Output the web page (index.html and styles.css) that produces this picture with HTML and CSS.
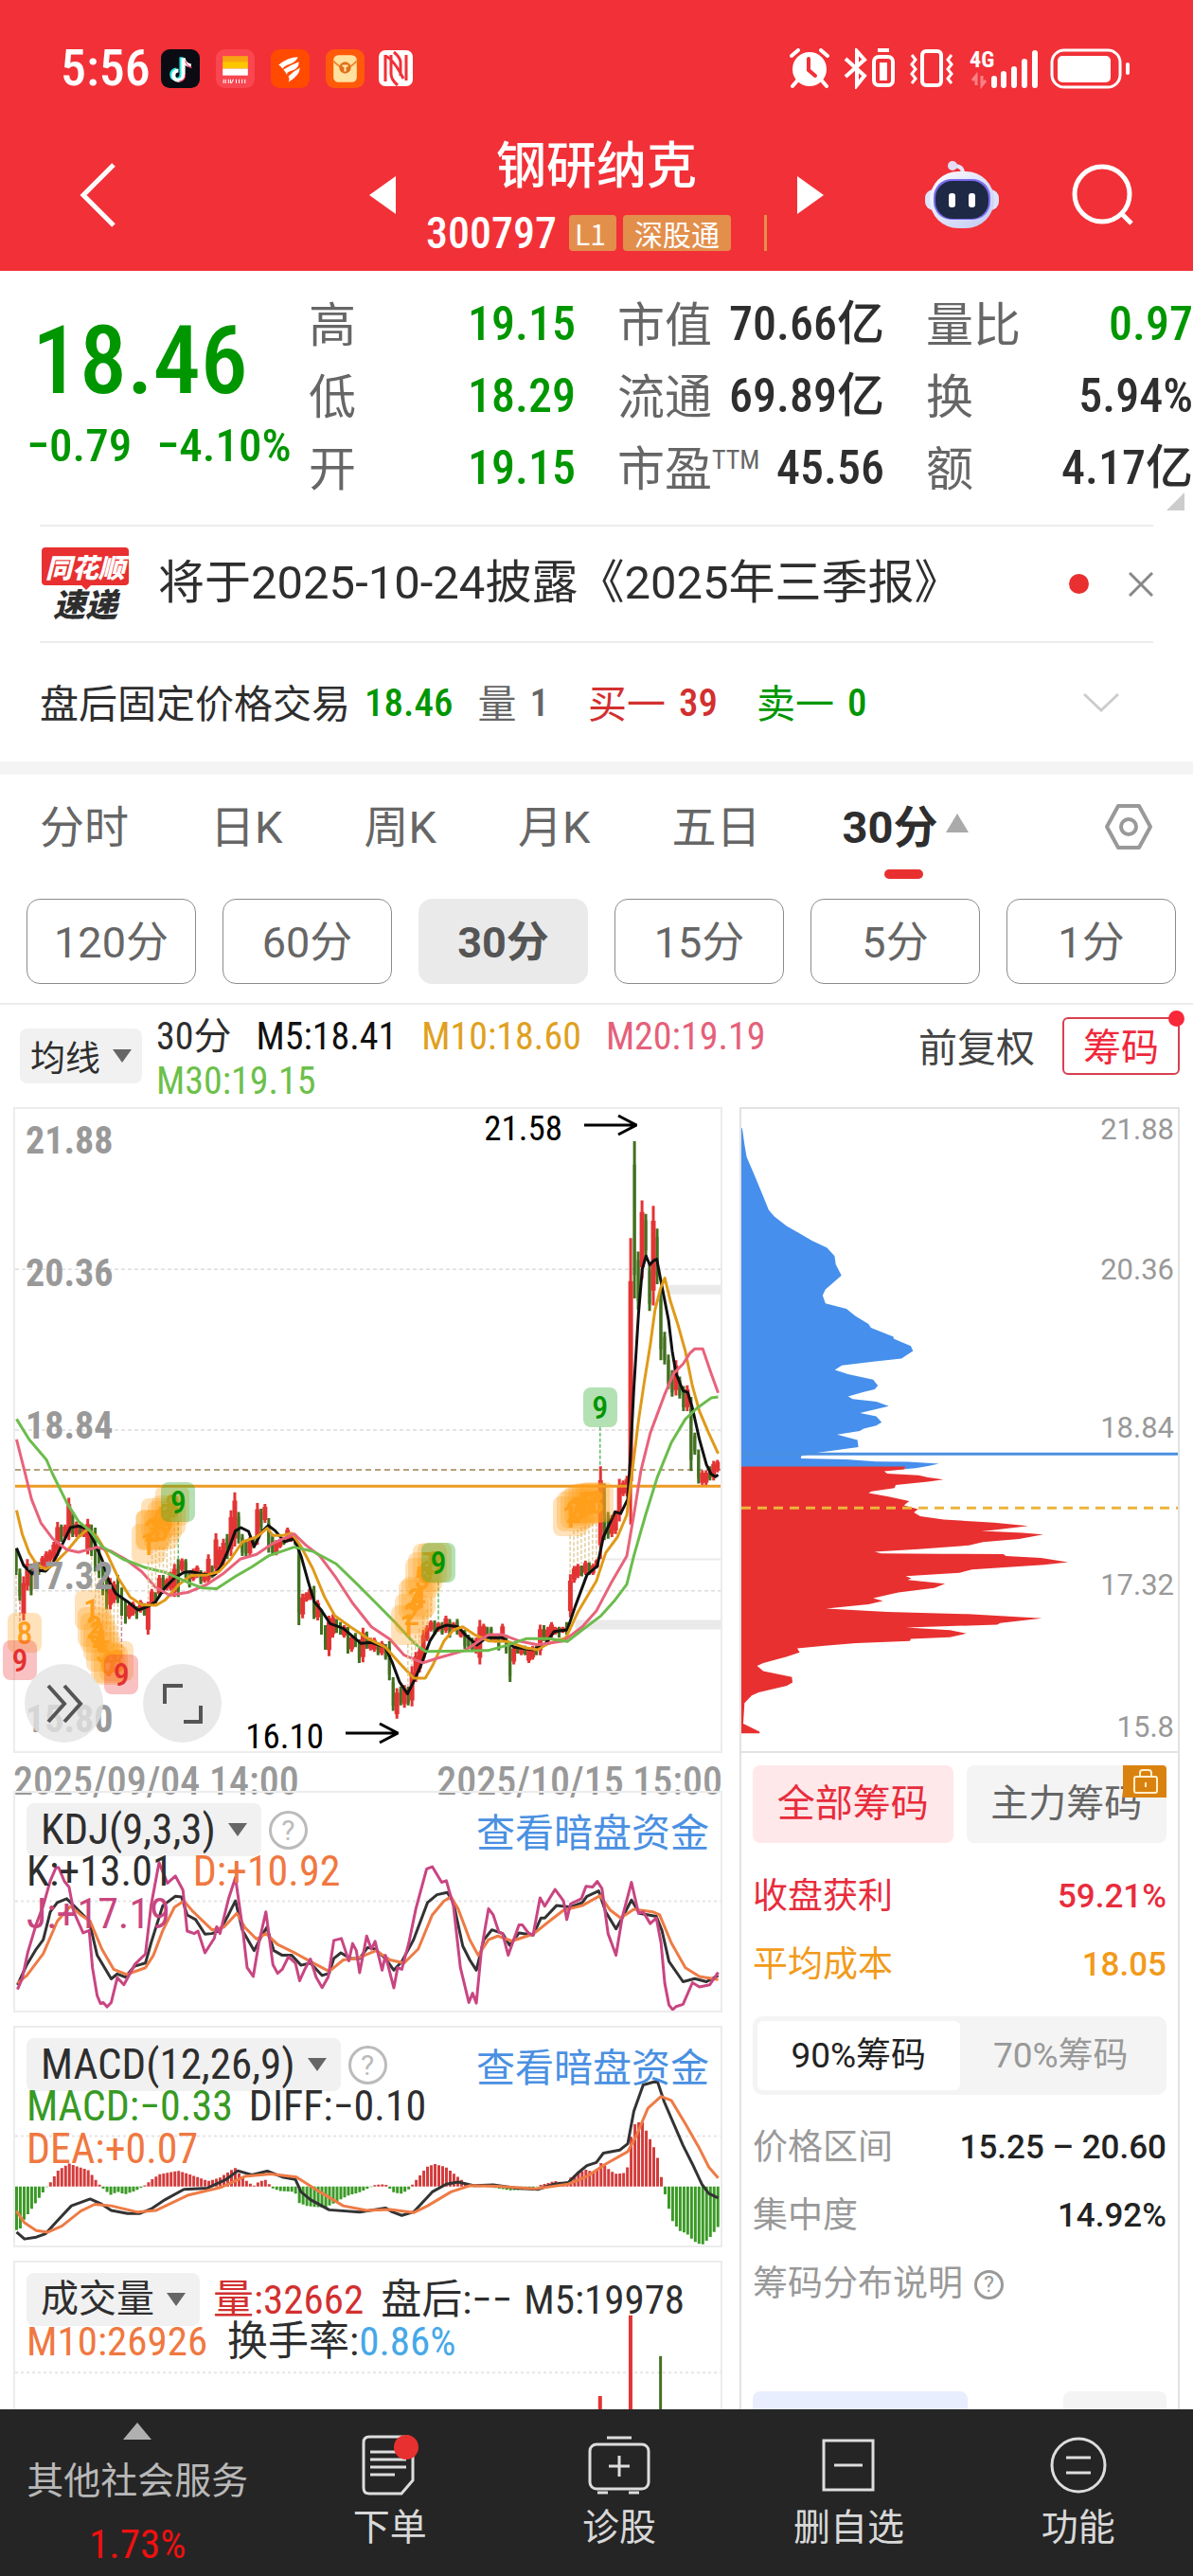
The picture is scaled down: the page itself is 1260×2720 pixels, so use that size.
FILE: index.html
```html
<!DOCTYPE html>
<html lang="zh-CN">
<head>
<meta charset="utf-8">
<meta name="viewport" content="width=device-width, initial-scale=1">
<title>钢研纳克 300797</title>
<link rel="stylesheet" href="styles.css">
</head>
<body>
<header class="top">
  <div class="status">
    <span class="clock">5:56</span>
    <svg class="app" viewBox="0 0 40 40"><rect width="40" height="40" rx="9" fill="#0b0b14"/><path d="M21 8v18a5 5 0 1 1-5-5" fill="none" stroke="#27e8e2" stroke-width="4"/><path d="M23 9v18a5 5 0 1 1-5-5M23 9q1 7 8 8" fill="none" stroke="#fff" stroke-width="4"/><path d="M25 12q2 6 7 7M25 26a6 6 0 0 1-6 7" fill="none" stroke="#fe2c55" stroke-width="1"/></svg>
    <svg class="app" viewBox="0 0 40 40"><rect width="40" height="40" rx="9" fill="#f94650"/><path d="M7 7h26v7H7z" fill="#f7a413"/><path d="M7 13h26v7H7z" fill="#fdc700"/><path d="M7 20h26v7H7z" fill="#fff"/><path d="M8 31v4m2-4v4m3-4v4m2-4v4m3-4l-2 4m5-4v4m3-4v4m3-4v4m3-4v4" stroke="#fff" stroke-width="1"/></svg>
    <svg class="app" viewBox="0 0 40 40"><rect width="40" height="40" rx="9" fill="#ff4a00"/><path d="M8 16q10-8 20-8-2 5-8 7t-8 5q-2-3-4-4zM13 21q8-5 16-8 0 7-7 9t-5 5q-2-4-4-6zM18 28q5-5 12-9 0 8-12 15 2-3 0-6z" fill="#fff"/></svg>
    <svg class="app" viewBox="0 0 40 40"><rect width="40" height="40" rx="9" fill="#ff5a0a"/><rect x="8" y="6" width="24" height="28" rx="5" fill="#ffe2a0"/><path d="M8 12q12 14 24 0" fill="none" stroke="#f08a30" stroke-width="2"/><circle cx="20" cy="19" r="6" fill="#e0701a"/><path d="M17 17h6m-3 0v6" stroke="#ffe9b0" stroke-width="2"/></svg>
    <svg class="nfc" viewBox="0 0 38 40"><rect x="1" y="1" width="36" height="38" rx="7" fill="#fff"/><path d="M8 6v28M14 6v20q0 6 7 12M8 7q9 4 19 24M17 3q6 5 7 10v15M30 6v27" fill="none" stroke="#f23037" stroke-width="3"/></svg>
    <svg class="signals" viewBox="0 0 362 43">
      <g fill="#fff"><circle cx="21" cy="22" r="18"/><path d="M9 33l-6 7M33 33l6 7M2 8l7-6M40 8l-7-6" stroke="#fff" stroke-width="4" stroke-linecap="round"/></g>
      <path d="M20 11v12l7 6" fill="none" stroke="#f23037" stroke-width="4" stroke-linecap="round"/>
      <g fill="none" stroke="#fff" stroke-width="4">
        <path d="M59 11l20 18-8 10V3l8 9-20 18"/><rect x="89" y="9" width="20" height="30" rx="5"/><path d="M93 2h12"/><rect x="97" y="17" width="4" height="15"/>
        <rect x="140" y="3" width="20" height="36" rx="4"/><path d="M129 7l4 5-4 5 4 5-4 5 4 5-4 5M171 7l-4 5 4 5-4 5 4 5-4 5 4 5" stroke-width="3"/>
      </g>
      <g stroke="#fff" stroke-width="6" stroke-linecap="round"><path d="M216 32v7M226 27v12M237 22v17M248 14v25M259 5v34"/></g>
      <g stroke="#fff" opacity=".4" stroke-width="3"><path d="M197 39V29l-4 5M203 29v10l4-5" fill="none"/></g>
      <rect x="277" y="2" width="72" height="39" rx="13" fill="none" stroke="#fff" stroke-width="3"/><rect x="283" y="8" width="56" height="28" rx="5" fill="#fff"/><path d="M357 17v9" stroke="#fff" stroke-width="4" stroke-linecap="round"/>
      <text class="net" x="190" y="20">4G</text>
    </svg>
  </div>
  <nav class="titlebar">
    <button class="icon-btn back" aria-label="返回"><svg viewBox="0 0 40 70" width="40" height="70"><path d="M36 3L4 35l32 32" fill="none" stroke="#fff" stroke-width="5"/></svg></button>
    <div class="stock">
      <button class="icon-btn" aria-label="上一只"><svg viewBox="0 0 28 40" width="28" height="40"><path d="M28 0v40L0 20z" fill="#fff"/></svg></button>
      <div class="stock-name">
        <h1>钢研纳克</h1>
        <p><span class="code">300797</span><span class="tag tag-l">L1</span><span class="tag">深股通</span><i class="tag-more"></i></p>
      </div>
      <button class="icon-btn" aria-label="下一只"><svg viewBox="0 0 28 40" width="28" height="40"><path d="M0 0v40l28-20z" fill="#fff"/></svg></button>
    </div>
    <div class="tools">
      <button class="icon-btn" aria-label="智能助手"><svg viewBox="0 0 78 72" width="78" height="72"><defs><linearGradient id="shell" x1="0" y1="0" x2="1" y2="1"><stop offset="0" stop-color="#fff"/><stop offset="1" stop-color="#bfc8f2"/></linearGradient></defs><path d="M40 13q0-8-10-8" fill="none" stroke="#e8e4f8" stroke-width="4"/><circle cx="29" cy="5" r="5" fill="#e2ddf5"/><rect x="0" y="30" width="78" height="22" rx="9" fill="#dfe3fa"/><rect x="5" y="11" width="68" height="60" rx="30" fill="url(#shell)"/><rect x="9" y="19" width="60" height="43" rx="19" fill="#7a6bf0"/><rect x="11" y="21" width="56" height="40" rx="18" fill="#1e2946"/><rect x="25" y="34" width="7" height="15" rx="3" fill="#fff"/><rect x="46" y="34" width="7" height="15" rx="3" fill="#fff"/></svg></button>
      <button class="icon-btn" aria-label="搜索"><svg viewBox="0 0 66 66" width="66" height="66"><circle cx="32" cy="32" r="29" fill="none" stroke="#fff" stroke-width="5"/><path d="M51 51l12 12" stroke="#fff" stroke-width="5"/></svg></button>
    </div>
  </nav>
</header>

<main>
  <section class="quote">
    <div class="price">
      <strong>18.46</strong>
      <p><span>−0.79</span><span>−4.10%</span></p>
    </div>
    <dl class="facts">
      <div><dt>高</dt><dd class="down">19.15</dd></div>
      <div><dt>市值</dt><dd>70.66亿</dd></div>
      <div><dt>量比</dt><dd class="down">0.97</dd></div>
      <div><dt>低</dt><dd class="down">18.29</dd></div>
      <div><dt>流通</dt><dd>69.89亿</dd></div>
      <div><dt>换</dt><dd>5.94%</dd></div>
      <div><dt>开</dt><dd class="down">19.15</dd></div>
      <div><dt>市盈<sup>TTM</sup></dt><dd>45.56</dd></div>
      <div><dt>额</dt><dd>4.17亿</dd></div>
    </dl>
    <i class="corner"></i>
  </section>

  <section class="news">
    <span class="logo"><b>同花顺</b><em>速递</em></span>
    <a href="#report">将于2025-10-24披露《2025年三季报》</a>
    <i class="dot"></i>
    <button class="icon-btn" aria-label="关闭"><svg viewBox="0 0 26 26" width="26" height="26"><path d="M1 1l24 24M25 1L1 25" stroke="#888" stroke-width="3"/></svg></button>
  </section>

  <section class="after">
    <span>盘后固定价格交易</span><b class="down last-price">18.46</b><span class="grey">量</span><b class="grey">1</b><span class="up">买一</span><b class="up">39</b><span class="down">卖一</span><b class="down">0</b>
    <button class="icon-btn" aria-label="展开"><svg viewBox="0 0 38 22" width="38" height="22"><path d="M1 2l18 17L37 2" fill="none" stroke="#ccc" stroke-width="3"/></svg></button>
  </section>

  <div class="tabs">
    <button>分时</button><button>日K</button><button>周K</button><button>月K</button><button>五日</button><button class="on">30分<i class="tri-up"></i></button>
    <button class="settings" aria-label="设置"><svg viewBox="0 0 52 50" width="52" height="50"><path d="M15 3h22l12 22-12 22H15L3 25z" fill="none" stroke="#999" stroke-width="4" stroke-linejoin="round"/><circle cx="26" cy="25" r="8" fill="none" stroke="#999" stroke-width="4"/></svg></button>
  </div>
  <div class="pills">
    <button>120分</button><button>60分</button><button class="on">30分</button><button>15分</button><button>5分</button><button>1分</button>
  </div>

  <div class="ma">
    <button class="drop">均线<i class="tri"></i></button>
    <p class="ma-list"><span>30分</span><span class="m5">M5:18.41</span><span class="m10">M10:18.60</span><span class="m20">M20:19.19</span><span class="m30">M30:19.15</span></p>
    <button class="plain">前复权</button>
    <button class="chips-btn">筹码<i></i></button>
  </div>

  <div class="board">
    <div class="left">
      <section class="plot" id="kline">
        <svg class="chart" viewBox="30 -990 1505 2040" preserveAspectRatio="none"></svg>
        <div class="axis"><span>21.88</span><span>20.36</span><span>18.84</span><span>17.32</span><span>15.80</span></div>
        <div class="marks"></div>
        <span class="note note-high">21.58<svg viewBox="0 0 56 24" width="56" height="24"><path d="M0 12h54M36 2l19 10-19 10" fill="none" stroke="#000" stroke-width="3"/></svg></span>
        <span class="note note-low">16.10<svg viewBox="0 0 56 24" width="56" height="24"><path d="M0 12h54M36 2l19 10-19 10" fill="none" stroke="#000" stroke-width="3"/></svg></span>
        <div class="float">
          <button aria-label="展开工具"><svg viewBox="0 0 42 42" width="42" height="42"><path d="M4 2l17 19L4 40M21 2l17 19-17 19" fill="none" stroke="#555" stroke-width="4"/></svg></button>
          <button aria-label="全屏"><svg viewBox="0 0 44 44" width="44" height="44"><path d="M3 22V3h19M41 24v17H23" fill="none" stroke="#555" stroke-width="4"/></svg></button>
        </div>
      </section>
      <p class="dates"><span>2025/09/04 14:00</span><span>2025/10/15 15:00</span></p>
      <section class="pane" id="kdj">
        <svg class="chart" viewBox="30 37 1505 701" preserveAspectRatio="none"></svg>
        <div class="pane-head"><button class="drop">KDJ(9,3,3)<i class="tri"></i></button><span class="help">?</span><a href="#dark">查看暗盘资金</a></div>
        <p><span>K:+13.01</span><span class="wide orange">D:+10.92</span></p>
        <p><span class="pink">J:+17.19</span></p>
      </section>
      <section class="pane" id="macd">
        <svg class="chart" viewBox="30 30 1505 703" preserveAspectRatio="none"></svg>
        <div class="pane-head"><button class="drop">MACD(12,26,9)<i class="tri"></i></button><span class="help">?</span><a href="#dark">查看暗盘资金</a></div>
        <p class="tight"><span class="green">MACD:−0.33</span><span>DIFF:−0.10</span></p>
        <p><span class="orange">DEA:+0.07</span></p>
      </section>
      <section class="pane last" id="vol">
        <svg class="chart" viewBox="30 773 1505 469" preserveAspectRatio="none"></svg>
        <div class="pane-head"><button class="drop">成交量<i class="tri"></i></button><span class="up first">量:32662</span><span class="mid">盘后:−−</span><span>M5:19978</span></div>
        <p><span class="orange">M10:26926</span><span class="wide">换手率:<span class="sky">0.86%</span></span></p>
      </section>
    </div>

    <aside class="right">
      <div class="dist">
        <svg class="chart" viewBox="35 21 1391 1523" preserveAspectRatio="none">
          <path fill="#468fec" d="M35 65L38 68 45 105 52 135 75 175 100 220 122 260 140 276 180 299 220 316 260 333 308 350 332 370 336 390 354 416 303 449 294 463 303 482 370 495 398 512 440 531 448 540 520 561 520 566 575 583 582 595 545 613 455 620 355 629 333 640 375 650 455 663 470 677 460 686 425 692 375 703 390 709 465 715 505 726 413 742 465 750 482 764 465 772 425 779 412 785 340 793 405 806 408 823 280 836 225 844 225 850 370 852 465 857 564 858 665 862 630 868 590 873 555 875 555 870 35 870z"/>
          <path fill="#e83030" d="M35 869H557L555 876 490 880 500 886 600 890 630 895 679 900 630 905 527 913 523 920 450 928 440 932 500 940 570 951 553 961 598 970 585 978 605 987 680 995 840 1002 949 1010 835 1020 800 1022 930 1026 997 1030 920 1041 805 1048 760 1056 600 1065 460 1071 480 1075 672 1076 870 1077 878 1081 990 1086 1076 1096 1000 1102 770 1113 730 1121 558 1129 577 1134 565 1138 684 1147 650 1157 535 1168 455 1181 486 1188 440 1196 305 1206 500 1214 756 1219 993 1229 860 1240 850 1244 560 1251 700 1257 752 1265 700 1274 575 1278 572 1283 400 1288 300 1294 213 1300 221 1310 180 1320 105 1335 85 1342 105 1354 196 1368 198 1381 180 1389 90 1405 68 1412 45 1430 41 1479 93 1498 93 1502H35z"/>
          <path d="M35 839H1426" stroke="#4a90e2" stroke-width="3"/>
          <path d="M35 967H1426" stroke="#ecb43c" stroke-width="3" stroke-dasharray="10 7"/>
        </svg>
        <div class="axis"><span>21.88</span><span>20.36</span><span>18.84</span><span>17.32</span><span>15.8</span></div>
      </div>
      <div class="stats">
        <div class="choose"><button class="on">全部筹码</button><button>主力筹码<svg class="lock" viewBox="0 0 46 34"><path d="M0 0h42q4 0 4 4v30H0z" fill="#d9820f"/><rect x="12" y="12" width="24" height="17" rx="2" fill="none" stroke="#ffeecb" stroke-width="2"/><path d="M18 12V8q0-3 3-3h6q3 0 3 3v4M24 18v5" fill="none" stroke="#ffeecb" stroke-width="2"/></svg></button></div>
        <p class="row red"><span>收盘获利</span><b>59.21%</b></p>
        <p class="row amber"><span>平均成本</span><b>18.05</b></p>
        <div class="seg"><button class="on">90%筹码</button><button>70%筹码</button></div>
        <p class="row"><span>价格区间</span><b>15.25 – 20.60</b></p>
        <p class="row"><span>集中度</span><b>14.92%</b></p>
        <p class="row"><span>筹码分布说明<i class="help small">?</i></span></p>
        <div class="stub"><i></i><i></i></div>
      </div>
    </aside>
  </div>
</main>

<nav class="bottom">
  <a href="#sector" class="sector"><i></i><span>其他社会服务</span><b>1.73%</b></a>
  <a href="#trade"><svg viewBox="0 0 60 64" width="60" height="64"><path d="M8 2h40q6 0 6 6v40L42 62H8q-6 0-6-6V8q0-6 6-6z" fill="none" stroke="#ddd" stroke-width="3"/><path d="M9 18h28M9 26h38M9 34h38M9 42h26" stroke="#ddd" stroke-width="3"/><circle cx="47" cy="13" r="13" fill="#e83030"/></svg><span>下单</span></a>
  <a href="#diagnose"><svg viewBox="0 0 66 64" width="66" height="64"><rect x="2" y="10" width="62" height="47" rx="7" fill="none" stroke="#ddd" stroke-width="3"/><path d="M20 3h26M33 22v22M22 33h22M10 61h11M43 61h11" stroke="#ddd" stroke-width="3"/></svg><span>诊股</span></a>
  <a href="#remove"><svg viewBox="0 0 56 64" width="56" height="64"><rect x="2" y="6" width="52" height="52" fill="none" stroke="#ddd" stroke-width="3"/><path d="M13 32h30" stroke="#ddd" stroke-width="3"/></svg><span>删自选</span></a>
  <a href="#more"><svg viewBox="0 0 60 64" width="60" height="64"><circle cx="30" cy="32" r="28" fill="none" stroke="#ddd" stroke-width="3"/><path d="M17 24h26M17 40h26" stroke="#ddd" stroke-width="3"/></svg><span>功能</span></a>
</nav>
<script src="script.js"></script>
</body>
</html>
```
FILE: styles.css
```css
:root {
  --num: "Liberation Sans Narrow", "Roboto Condensed", Roboto, "Noto Sans CJK SC", sans-serif;
  --text: Roboto, "Noto Sans CJK SC", sans-serif;
  --line: #ececec;
  --ink: #2e2e2e;
}
* { box-sizing: border-box; }
body { margin: 0; min-height: 100vh; display: flex; flex-direction: column; background: #fff; color: var(--ink); font-family: "Noto Sans CJK SC", sans-serif; }
h1, p, dl, dd { margin: 0; }
button { font: inherit; color: inherit; border: 0; padding: 0; background: none; white-space: nowrap; }
a { color: inherit; text-decoration: none; }
svg { display: block; }
i, em { font-style: normal; }
.icon-btn { flex: none; display: flex; }
.down { color: #009600; }
.up { color: #d2302f; }

/* header */
.top { background: #f23037; color: #fff; }
.status { display: flex; align-items: center; height: 104px; padding: 40px 64px 0; }
.clock { font: 500 54px/64px var(--num); margin-right: 11px; }
.app { flex: none; width: 41px; height: 41px; margin-right: 17px; }
.nfc { flex: none; width: 38px; height: 40px; margin-left: -3px; }
.signals { flex: none; margin-left: auto; width: 362px; height: 43px; }
.net { font: 700 24px var(--num); fill: #fff; }
.titlebar { display: grid; grid-template-columns: 1fr 480px 1fr; align-items: center; height: 182px; padding: 22px 62px 0 84px; }
.stock { display: flex; align-items: center; justify-content: space-between; margin-left: -11px; margin-right: 11px; }
.stock-name { text-align: center; }
.stock-name h1 { font-size: 53px; line-height: 62px; font-weight: 500; }
.stock-name p { display: flex; align-items: center; gap: 7px; height: 70px; padding-top: 18px; }
.code { font: 500 46px/48px var(--num); margin-right: 6px; }
.tag { font-size: 30px; line-height: 38px; background: #e38f4c; padding: 0 12px; border-radius: 4px; }
.tag-l { padding: 0 11px 0 6px; }
.tag-more { width: 3px; height: 38px; background: #e38f4c; margin-left: 28px; }
.tools { display: flex; align-items: center; justify-content: flex-end; gap: 77px; }

/* quote */
.quote { position: relative; display: flex; padding: 18px 0 22px; }
.price { width: 326px; padding-top: 14px; color: #009600; font-family: var(--num); font-weight: 500; }
.price strong { display: block; font-size: 100px; line-height: 126px; font-weight: 500; padding-left: 34px; }
.price p { display: flex; gap: 26px; padding-left: 28px; font-size: 49px; line-height: 54px; }
.facts { flex: 1; display: grid; grid-template-columns: repeat(3, 1fr); column-gap: 44px; }
.facts div { display: flex; justify-content: space-between; font-size: 50px; line-height: 76px; height: 76px; white-space: nowrap; }
.facts dt { color: #666; line-height: 70px; }
.facts sup { font-size: 28px; line-height: 28px; vertical-align: 18px; font-family: var(--num); }
.facts dd { font-family: var(--num); font-weight: 500; }
.corner { position: absolute; right: 9px; bottom: 15px; border-left: 19px solid transparent; border-bottom: 19px solid #ccc; }
.news { display: flex; align-items: center; height: 125px; margin: 0 42px; border-top: 2px solid var(--line); border-bottom: 2px solid var(--line); }
.logo { width: 96px; display: flex; flex-direction: column; align-items: center; }
.logo b { position: relative; width: 92px; border-radius: 4px; background: #e83030; color: #fff; font-size: 28px; font-weight: 900; font-style: italic; line-height: 40px; text-align: center; }
.logo b::after { content: ""; position: absolute; left: 42px; top: 40px; border: 5px solid transparent; border-top-color: #e83030; }
.logo em { font-size: 34px; font-weight: 900; font-style: italic; line-height: 38px; }
.news a { font-size: 49px; line-height: 60px; margin-left: 29px; padding-bottom: 2px; white-space: nowrap; font-family: var(--text); }
.dot { width: 21px; height: 21px; border-radius: 50%; background: #e83030; margin: 0 42px 0 auto; }
.after { display: flex; align-items: center; height: 125px; padding: 0 78px 0 42px; font-size: 41px; white-space: nowrap; }
.after span { line-height: 56px; padding-bottom: 3px; }
.after b { font: 500 41px/50px var(--num); margin: 0 41px 0 14px; }
.after .last-price { margin: 0 26px 0 15px; }
.after .grey { color: #666; }
.after .icon-btn { margin-left: auto; }

/* periods */
.tabs { display: flex; gap: 86px; align-items: stretch; height: 124px; border-top: 14px solid #f4f4f4; padding: 0 42px; font-size: 47px; color: #666; font-family: var(--text); }
.tabs button { position: relative; display: flex; align-items: center; padding-bottom: 8px; }
.tabs .on { color: var(--ink); font-weight: 700; }
.tabs .on::after { content: ""; position: absolute; left: 44px; bottom: 0; width: 41px; height: 10px; border-radius: 5px; background: #e83030; }
.tri-up { border: 12px solid transparent; border-top: 0; border-bottom: 20px solid #aaa; margin-left: 9px; }
.tabs .settings { margin-left: auto; padding: 0; }
.pills { display: grid; grid-template-columns: repeat(6, 1fr); gap: 28px; padding: 21px 18px 20px 28px; border-bottom: 2px solid var(--line); }
.pills button { height: 90px; padding-bottom: 5px; border: 1px solid #8c8c8c; border-radius: 14px; font: 45px var(--text); color: #666; }
.pills .on { background: #eaeaea; border-color: #eaeaea; font-weight: 700; color: #555; }

.ma { display: flex; align-items: flex-start; height: 108px; padding: 10px 14px 0 21px; font-size: 37px; white-space: nowrap; }
.drop { display: flex; align-items: center; background: #f1f1f1; border-radius: 8px; height: 56px; padding: 0 15px; font: 45px/50px var(--num); }
.tri { border: 10px solid transparent; border-bottom: 0; border-top: 14px solid #666; margin-left: 13px; }
.ma .drop { height: 58px; margin-top: 15px; font: 37px/50px "Noto Sans CJK SC", sans-serif; padding: 0 11px; }
.ma-list { flex: 1; display: flex; flex-wrap: wrap; column-gap: 26px; padding-left: 15px; padding-right: 80px; font: 40px/47px var(--num); }
.m5 { color: #111; }
.m10 { color: #e0a020; }
.m20 { color: #e5607a; }
.m30 { color: #6cc04a; }
.plain { font-size: 41px; line-height: 64px; color: #444; }
.chips-btn { position: relative; margin: 3px 0 0 29px; height: 61px; padding: 0 20px 3px; border: 2px solid #d84050; border-radius: 6px; color: #f0283c; font-size: 40px; line-height: 50px; }
.chips-btn i { position: absolute; right: -7px; top: -9px; width: 17px; height: 17px; border-radius: 50%; background: #f8283a; }

/* charts */
main { flex: 1; display: flex; flex-direction: column; }
.board { flex: 1; display: grid; grid-template-columns: minmax(0, 749fr) minmax(0, 465fr); column-gap: 18px; padding: 0 14px; }
.left { display: flex; flex-direction: column; }
.right { display: flex; flex-direction: column; border: 2px solid #e2e2e2; border-bottom: 0; }
.plot { position: relative; height: 682px; border: 2px solid var(--line); }
.chart { position: absolute; inset: 0; width: 100%; height: 100%; }
.chart path { vector-effect: non-scaling-stroke; }
.chart .line { fill: none; stroke-width: 3; stroke-linejoin: round; }
.axis { position: relative; display: grid; height: 100%; align-items: end; color: #999; }
.plot .axis { grid-template-rows: 57fr 141fr 161fr 160fr 151fr 10fr; padding-left: 11px; font: 700 40px/46px var(--num); }
.mark { position: absolute; width: 36px; height: 42px; margin: -21px 0 0 -18px; border-radius: 8px; font: 500 34px/42px var(--num); text-align: center; }
.mark-o { background: rgba(255, 159, 28, .3); color: #ff9f1c; }
.mark-g { background: rgba(40, 170, 40, .35); color: #009600; }
.mark-r { background: rgba(235, 50, 50, .3); color: #e33030; }
.note { position: absolute; display: flex; align-items: center; gap: 23px; font: 37px/40px var(--num); color: #000; }
.note-high { top: 1px; right: 88px; }
.note svg { margin-bottom: 8px; }
.note-low { bottom: -5px; right: 340px; }
.float { position: absolute; left: 10px; bottom: 9px; display: flex; gap: 42px; }
.float button { width: 83px; height: 83px; border-radius: 50%; background: rgba(228, 228, 228, .8); display: flex; align-items: center; justify-content: center; }
.dates { display: flex; justify-content: space-between; height: 40px; font: 500 42px/60px var(--num); color: #999; white-space: nowrap; }
.pane { position: relative; height: 234px; margin-bottom: 14px; border: 2px solid var(--line); padding: 11px 12px; font: 44px/45px var(--num); white-space: nowrap; }
.pane.last { flex: 1; height: auto; margin: 0; border-bottom: 0; font-size: 43px; }
.pane > p, .pane-head { position: relative; display: flex; gap: 17px; }
.pane > p .wide { margin-left: 4px; }
.pane-head { align-items: center; gap: 8px; margin-bottom: -6px; }
.pane-head a { margin-left: auto; font: 41px/45px "Noto Sans CJK SC", sans-serif; color: #4a90e2; }
.pane.last .drop { font-size: 40px; }
.help { width: 41px; height: 41px; border: 3px solid #bbb; border-radius: 50%; color: #bbb; font: 30px/35px Roboto, sans-serif; text-align: center; }
.pane-head .first { margin-left: 6px; }
.pane-head .mid { margin: 0 4px 0 10px; }
.orange { color: #f07840; }
.pink { color: #c8457f; }
.green { color: #379a24; }
.sky { color: #46a8e8; }

/* cost distribution */
.dist { position: relative; height: 680px; border-bottom: 2px solid #e2e2e2; }
.dist .axis { grid-template-rows: 40fr 149fr 167fr 167fr 150fr 7fr; font: 31px/36px Roboto, sans-serif; text-align: right; padding-right: 4px; }
.stats { flex: 1; display: flex; flex-direction: column; padding: 13px 12px 0; font: 37px/72px var(--text); }
.choose { display: grid; grid-template-columns: 1fr 1fr; gap: 14px; font-size: 40px; margin-bottom: 21px; }
.choose button { position: relative; height: 82px; border-radius: 8px; background: #f4f4f4; color: #666; }
.choose .on { background: #ffe8ea; color: #e82c3c; }
.lock { position: absolute; right: 0; top: 0; width: 46px; height: 34px; }
.row { display: flex; justify-content: space-between; color: #999; line-height: 72px; white-space: nowrap; }
.row b { font-weight: 500; color: #222; font-size: 35px; }
.row.red, .red b { color: #e82c3c; }
.row.amber, .amber b { color: #f29a1a; }
.seg { display: grid; grid-template-columns: 1fr 1fr; height: 83px; margin: 18px 0 20px; padding: 5px; border-radius: 10px; background: #f4f4f4; color: #999; }
.seg .on { background: #fff; border-radius: 6px; color: #222; }
.small { display: inline-block; width: 31px; height: 31px; font-size: 23px; line-height: 26px; margin-left: 12px; vertical-align: 4px; border-color: #999; color: #999; }
.stub { display: flex; justify-content: space-between; margin-top: auto; }
.stub i { height: 19px; width: 52%; border-radius: 8px 8px 0 0; background: #e8eefe; }
.stub i + i { width: 25%; background: #f4f4f4; }

/* bottom bar */
.bottom { display: grid; grid-template-columns: 290fr repeat(4, 242fr); height: 176px; background: #252525; color: #d8d8d8; font-size: 39px; }
.bottom a { display: flex; flex-direction: column; align-items: center; padding-top: 27px; line-height: 60px; }
.bottom .sector { padding-top: 14px; color: #b8b8b8; }
.sector i { border: 15px solid transparent; border-top: 0; border-bottom: 18px solid #b0b0b0; }
.sector span { line-height: 80px; }
.sector b { color: #f01010; font: 43px/60px var(--num); }
```
FILE: script.js
```js
const NS = 'http://www.w3.org/2000/svg';
const STEP = 8.045;

function add(svg, d, attrs) {
  const p = document.createElementNS(NS, 'path');
  p.setAttribute('d', d);
  for (const k in attrs) p.setAttribute(k, attrs[k]);
  svg.appendChild(p);
}
const line = (svg, pts, stroke) => add(svg, 'M' + pts, { class: 'line', stroke });
const chartOf = id => document.querySelector('#' + id + ' .chart');

/* price chart */
const k = chartOf('kline');
add(k, 'M30 -481H1535M30 30H1535M30 541H1535', { stroke: '#dcdcdc', 'stroke-width': 1.5, 'stroke-dasharray': '4 3' });
add(k, 'M1425 -416H1535M1225 648H1535', { stroke: '#eaeaea', 'stroke-width': 10 });
add(k, 'M1290 441H1535', { stroke: '#eaeaea', 'stroke-width': 2 });
add(k, 'M30 156H1535', { stroke: '#b7a07c', 'stroke-width': 2, 'stroke-dasharray': '6 4' });

/* one entry per bar: colour, high, low */
const bars = `g405,490 g470,572 r495,635 r440,540 g455,555 r445,495 g450,490 r430,475 r415,470 r410,450 r385,445 r322,430 g330,385 r330,375 r245,380 g290,370 r320,370 g330,370 r335,370 r312,425 g330,430 g340,480 g400,500 g460,555 g500,600 r500,600 r510,580 g490,580 g530,620 g570,645 r580,630 r575,620 g590,630 r570,610 g580,620 r575,680 r535,590 g545,580 r490,560 g490,550 r500,540 r480,540 r455,560 g440,560 r438,480 g440,500 g475,530 r470,510 r460,500 g475,520 r480,515 r425,520 g460,500 r358,490 r400,470 r375,460 g360,440 r285,430 r228,400 g290,390 g360,430 g380,430 r370,430 g370,405 r262,395 g280,350 r265,325 g310,420 g360,428 r380,428 r375,405 g375,395 r340,385 r355,385 g360,395 g390,650 r550,628 r545,575 r530,570 g525,630 r570,635 g600,680 g650,728 r620,748 r615,690 g630,675 g640,680 r650,690 g655,740 r680,735 g675,720 g695,770 r658,768 g670,725 r690,730 r690,735 g705,745 r700,745 g710,760 g700,825 g815,922 r850,947 g845,905 r840,912 g845,905 r780,908 r735,830 r720,800 r665,770 r650,700 r635,670 g635,680 r640,670 g640,680 r620,675 g630,690 r640,670 g630,680 r660,690 g665,725 g680,725 g690,735 r690,740 r633,775 r645,690 g655,690 g655,700 r680,705 g680,730 r645,700 g680,740 g700,830 r715,775 g710,740 r715,745 g715,745 r720,770 r715,760 g715,745 r648,745 g650,700 r655,710 r640,690 r655,680 g655,690 r655,675 g640,680 r488,625 r462,515 r455,500 g460,495 r445,490 g450,490 r455,490 r440,470 r145,440 g200,380 g290,375 r300,370 r285,360 r185,320 r190,240 r175,240 r-580,330 g-888,-388 g-537,-352 r-700,-450 g-657,-520 g-500,-348 r-682,-366 g-610,-433 g-420,-192 g-282,-178 g-210,-100 g-160,-76 r-192,-80 g-140,-70 g-110,-30 r-112,-30 g-75,160 g38,108 g92,200 r158,205 r158,205 g145,190 r128,190 r125,165`.split(' ');
const candle = { r: '', g: '' };
const body = { r: '', g: '' };
bars.forEach((b, i) => {
  const [hi, lo] = b.slice(1).split(',').map(Number);
  const x = (32 + i * STEP).toFixed(1);
  const inset = (lo - hi) * 0.15;
  candle[b[0]] += `M${x} ${hi}V${lo}`;
  body[b[0]] += `M${x} ${hi + inset}V${lo - inset}`;
});
add(k, candle.g, { stroke: '#42701f', 'stroke-width': 3 });
add(k, candle.r, { stroke: '#e33434', 'stroke-width': 3 });
add(k, body.g, { stroke: '#42701f', 'stroke-width': 3 });
add(k, body.r, { stroke: '#e33434', 'stroke-width': 5 });
add(k, 'M30 208H1535', { stroke: '#ee9a24', 'stroke-width': 3 });

line(k, '33 405 48 460 66 487 75 475 95 478 110 455 130 395 148 340 165 335 185 345 200 390 215 440 230 510 245 550 270 575 292 602 315 590 330 575 350 530 370 500 390 482 405 480 430 488 455 490 470 460 485 410 500 350 512 340 528 352 540 400 555 355 570 333 585 350 605 385 625 375 640 430 655 510 668 575 682 600 702 645 730 660 768 708 790 705 820 720 835 770 850 830 867 868 880 830 895 780 915 700 932 660 950 650 975 655 990 680 1015 713 1035 690 1070 690 1095 720 1135 728 1160 712 1180 670 1208 665 1225 590 1250 490 1272 462 1285 370 1310 290 1322 295 1337 250 1342 130 1350 -100 1360 -340 1368 -480 1376 -523 1384 -495 1392 -508 1399 -513 1407 -450 1424 -320 1432 -220 1440 -150 1455 -95 1465 -90 1475 -40 1490 60 1505 140 1515 170 1524 178 1530 172', '#111');
line(k, '33 285 45 360 60 420 75 455 95 472 110 460 140 415 165 370 185 345 205 370 225 420 250 500 275 560 300 585 330 587 350 570 380 520 405 492 440 490 465 480 490 440 515 385 545 370 568 342 580 365 600 365 620 358 640 400 665 470 690 560 712 620 745 655 780 690 820 720 850 770 880 818 905 818 920 780 945 700 965 665 985 655 1010 680 1040 700 1080 702 1120 722 1145 728 1165 710 1205 690 1230 610 1270 510 1290 420 1315 370 1335 300 1350 120 1360 0 1372 -120 1385 -240 1395 -350 1407 -420 1416 -453 1428 -380 1445 -300 1460 -220 1475 -110 1490 -30 1510 40 1530 105', '#e09a18');
line(k, '33 60 50 160 65 250 85 325 110 375 140 410 165 418 205 402 235 415 265 440 300 480 330 530 360 555 400 545 440 520 475 485 510 440 545 425 580 390 625 360 650 395 680 430 715 500 750 580 790 655 830 695 860 745 900 770 930 755 990 730 1040 680 1070 680 1105 700 1145 712 1200 700 1240 655 1270 605 1300 520 1335 430 1350 300 1365 160 1385 40 1400 -20 1415 -80 1435 -150 1455 -180 1470 -215 1480 -228 1497 -228 1515 -150 1530 -88', '#e8637a');
line(k, '33 -5 60 60 97 125 110 170 140 260 165 320 190 350 215 400 260 440 310 468 350 482 400 515 430 532 460 534 500 495 535 465 570 430 625 402 665 415 715 455 760 520 800 580 840 640 880 705 905 733 990 732 1040 730 1070 718 1120 693 1170 693 1208 702 1240 665 1280 620 1310 570 1335 520 1350 430 1375 300 1400 180 1430 70 1460 -5 1485 -40 1515 -72 1530 -75', '#6cbc4c');

/* nine-turn marks: x, y, label, tone */
const marks = [
  [50, 675, 8, 'o'], [40, 760, 9, 'r'],
  [193, 603, 1, 'o'], [199, 655, 2, 'o'], [205, 675, 3, 'o'], [211, 700, 4, 'o'], [218, 735, 5, 'o'], [228, 770, 6, 'o'], [235, 775, 7, 'o'], [247, 765, 8, 'o'], [257, 805, 9, 'r'],
  [314, 390, 1, 'o'], [322, 350, 2, 'o'], [325, 345, 3, 'o'], [336, 310, 4, 'o'], [341, 345, 5, 'o'], [350, 320, 6, 'o'], [358, 300, 7, 'o'], [366, 270, 8, 'o'], [378, 258, 9, 'g'],
  [868, 650, 1, 'o'], [876, 615, 2, 'o'], [884, 570, 3, 'o'], [890, 560, 4, 'o'], [898, 500, 5, 'o'], [905, 480, 6, 'o'], [915, 455, 7, 'o'], [925, 452, 8, 'o'], [933, 450, 9, 'g'],
  [1214, 305, 1, 'o'], [1222, 288, 2, 'o'], [1230, 280, 3, 'o'], [1238, 270, 4, 'o'], [1246, 265, 5, 'o'], [1254, 262, 6, 'o'], [1262, 262, 7, 'o'], [1270, 258, 8, 'o'], [1278, -43, 9, 'g']
];
const stem = (list, stroke) => add(k, list.map(([x, a, b]) => `M${x} ${a}V${b}`).join(''), { stroke, 'stroke-width': 1.5, 'stroke-dasharray': '4 2' });
stem([[32, 490, 620], [193, 430, 545], [201, 480, 600], [209, 500, 620], [217, 560, 650], [225, 600, 690], [233, 600, 710], [241, 580, 715], [249, 580, 720], [314, 450, 575], [322, 410, 535], [330, 405, 540], [338, 400, 490], [346, 400, 490], [354, 385, 500], [362, 360, 480], [370, 340, 455], [868, 710, 845], [876, 700, 780], [884, 680, 735], [892, 660, 720], [900, 620, 665], [909, 600, 650], [917, 560, 635], [1214, 365, 488], [1222, 350, 462], [1230, 345, 455], [1238, 340, 455], [1246, 335, 445], [1254, 330, 450], [1262, 325, 455], [1270, 325, 440]], '#e3cd9c');
stem([[40, 572, 700], [257, 620, 740]], '#d08a90');
stem([[378, 320, 440], [933, 512, 640], [1278, 20, 145]], '#62bb62');
const layer = document.querySelector('.marks');
for (const [x, y, n, tone] of marks) {
  const m = document.createElement('span');
  m.className = 'mark mark-' + tone;
  m.textContent = n;
  m.style.left = ((x - 30) / 15.05).toFixed(2) + '%';
  m.style.top = ((y + 990) / 20.4).toFixed(2) + '%';
  layer.appendChild(m);
}

/* KDJ */
const kdj = chartOf('kdj');
add(kdj, 'M30 386H1535', { stroke: '#e6e6e6', 'stroke-width': 2, 'stroke-dasharray': '3 3' });
line(kdj, '35 655 55 590 75 540 90 510 105 420 120 390 140 378 155 400 188 450 205 560 235 636 248 620 265 630 285 595 308 585 320 520 345 400 372 370 385 372 397 430 415 445 435 492 450 490 467 480 485 430 500 385 515 480 540 545 555 500 567 470 582 545 600 560 620 560 640 592 660 585 685 625 700 618 710 570 725 552 745 570 765 570 782 535 798 540 820 570 838 608 855 580 880 510 910 390 930 365 952 358 965 390 985 530 1000 575 1014 608 1030 510 1047 478 1070 490 1085 528 1105 488 1135 495 1152 440 1160 440 1185 400 1215 405 1240 390 1250 370 1275 353 1290 420 1312 475 1325 440 1345 382 1362 425 1398 435 1410 480 1425 580 1455 645 1480 635 1505 645 1530 625', '#333');
line(kdj, '35 650 55 625 90 555 120 450 148 402 170 430 190 450 215 540 240 605 268 622 308 600 325 560 345 480 370 405 390 385 410 420 450 478 475 470 503 425 520 470 545 508 565 490 590 525 630 555 660 580 700 612 730 575 760 570 800 545 830 575 860 585 890 540 920 430 945 385 960 372 975 410 1000 510 1018 560 1040 510 1060 498 1090 514 1135 492 1170 450 1200 415 1240 400 1278 368 1300 415 1322 440 1350 412 1390 420 1405 430 1430 520 1460 600 1490 628 1530 638', '#ee7b45');
line(kdj, '35 670 45 635 57 550 75 460 90 400 105 320 117 278 123 278 135 322 145 340 155 420 175 488 188 480 195 600 205 690 212 715 218 712 226 726 235 712 248 632 262 655 285 590 308 556 320 400 337 262 355 328 372 305 388 350 397 482 412 490 420 482 435 552 455 505 460 468 467 490 485 380 500 310 515 470 525 600 538 628 550 520 565 420 580 590 590 618 600 605 613 565 628 585 637 642 648 605 660 572 672 630 685 664 698 630 710 512 726 506 742 578 750 522 758 545 765 616 780 498 790 540 798 515 813 608 820 560 838 665 846 600 855 605 870 520 885 410 908 282 920 275 940 325 950 320 965 400 980 600 998 712 1006 682 1014 714 1025 540 1040 410 1050 430 1062 485 1070 490 1082 560 1105 462 1112 462 1125 488 1135 495 1150 375 1160 402 1182 348 1200 385 1207 445 1215 395 1238 378 1248 338 1262 340 1272 322 1282 345 1295 490 1312 560 1325 440 1345 325 1360 425 1370 420 1385 458 1398 440 1408 520 1416 650 1425 720 1433 735 1440 725 1455 718 1475 648 1490 662 1512 655 1530 615', '#c94582');

/* MACD: histogram tips are interpolated between the listed points */
const macd = chartOf('macd');
const tips = [33, 683, 41, 678, 49, 650, 65, 615, 81, 580, 97, 545, 105, 530, 121, 492, 145, 468, 165, 480, 185, 488, 209, 535, 217, 548, 233, 570, 249, 560, 265, 568, 289, 555, 305, 541, 322, 520, 338, 503, 378, 492, 402, 503, 442, 525, 466, 515, 499, 482, 515, 515, 539, 541, 547, 530, 563, 520, 571, 533, 579, 548, 595, 557, 627, 560, 635, 595, 651, 605, 691, 612, 708, 598, 740, 572, 764, 562, 788, 545, 796, 538, 820, 535, 836, 560, 852, 567, 868, 555, 884, 525, 908, 480, 925, 470, 949, 480, 973, 510, 989, 530, 1005, 540, 1045, 545, 1085, 555, 1134, 552, 1150, 538, 1182, 525, 1206, 532, 1214, 515, 1246, 488, 1270, 498, 1278, 465, 1310, 502, 1335, 498, 1343, 390, 1351, 343, 1367, 330, 1383, 385, 1399, 437, 1407, 500, 1415, 558, 1431, 650, 1447, 685, 1463, 695, 1479, 720, 1495, 732, 1511, 710, 1530, 672];
add(macd, 'M30 380H1535', { stroke: '#e6e6e6', 'stroke-width': 2, 'stroke-dasharray': '3 3' });
let rise = '', fall = '';
for (let i = 0, j = 0; i < 187; i++) {
  const x = 33 + i * STEP;
  while (j < tips.length - 4 && tips[j + 2] < x) j += 2;
  const y = tips[j + 1] + (tips[j + 3] - tips[j + 1]) * (x - tips[j]) / (tips[j + 2] - tips[j]);
  const seg = `M${x.toFixed(1)} 543V${y.toFixed(1)}`;
  if (y < 543) rise += seg; else fall += seg;
}
add(macd, rise, { stroke: '#d43c3c', 'stroke-width': 3 });
add(macd, fall, { stroke: '#3b9a26', 'stroke-width': 3 });
line(macd, '33 690 50 712 75 706 95 695 125 645 150 605 190 583 215 600 235 620 270 630 295 630 320 615 350 585 390 552 440 548 480 520 505 492 535 505 568 493 600 512 628 520 640 560 660 585 700 618 765 625 820 612 835 625 855 636 880 625 920 560 950 535 975 528 1010 540 1050 537 1100 548 1145 552 1180 535 1210 530 1230 500 1250 475 1270 465 1285 435 1320 425 1337 405 1350 300 1370 215 1400 202 1415 270 1435 340 1455 410 1475 470 1495 535 1510 565 1530 580', '#333');
line(macd, '33 622 50 660 75 685 100 690 130 670 170 622 200 600 235 605 290 625 330 620 400 570 470 545 520 510 575 502 630 512 680 560 730 605 780 620 830 617 880 627 910 605 960 560 1000 540 1060 542 1140 550 1210 535 1250 510 1290 470 1337 430 1355 380 1380 290 1408 252 1430 265 1460 340 1490 420 1510 480 1530 515', '#ee7b45');

/* volume */
const vol = chartOf('vol');
add(vol, 'M30 1125H1535', { stroke: '#e6e6e6', 'stroke-width': 2, 'stroke-dasharray': '3 3' });
add(vol, 'M1278 1200V1242M1343 942V1242', { stroke: '#e33434', 'stroke-width': 4 });
add(vol, 'M1407 1072V1242', { stroke: '#42701f', 'stroke-width': 3 });
```
